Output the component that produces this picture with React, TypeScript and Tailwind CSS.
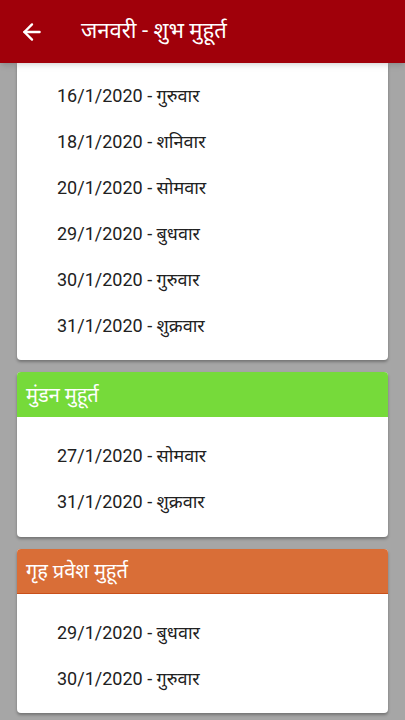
import React from "react";
import { ArrowLeft } from "lucide-react";

const rows1 = [
  "16/1/2020 - गुरुवार",
  "18/1/2020 - शनिवार",
  "20/1/2020 - सोमवार",
  "29/1/2020 - बुधवार",
  "30/1/2020 - गुरुवार",
  "31/1/2020 - शुक्रवार",
];
const rows2 = ["27/1/2020 - सोमवार", "31/1/2020 - शुक्रवार"];
const rows3 = ["29/1/2020 - बुधवार", "30/1/2020 - गुरुवार"];

function Row({ t }: { t: string }) {
  return (
    <div className="h-[46px] flex items-center pl-[40px] text-[18px] text-[#212121]">
      {t}
    </div>
  );
}

export default function App() {
  return (
    <div
      className="w-[405px] h-[720px] overflow-hidden bg-[#a6a6a6] flex flex-col"
      style={{ fontFamily: "Roboto, 'Noto Sans', sans-serif" }}
    >
      <div className="h-[63px] shrink-0 bg-[#a0000a] flex items-center shadow-md z-10">
        <ArrowLeft className="ml-[19px] text-white" size={26} strokeWidth={2.2} />
        <div className="ml-[36px] text-white text-[22px] leading-none pb-[2px]">
          जनवरी - शुभ मुहूर्त
        </div>
      </div>
      <div className="flex flex-col gap-[12px] px-[17px]">
        <div className="bg-white rounded-b-[4px] shadow-[0_2px_3px_rgba(0,0,0,0.3)] pt-[9px] pb-[12px]">
          {rows1.map((r) => (
            <Row key={r} t={r} />
          ))}
        </div>
        <div className="bg-white rounded-[4px] shadow-[0_2px_3px_rgba(0,0,0,0.3)] overflow-hidden">
          <div className="h-[45px] bg-[#76da3a] flex items-center pl-[9px] text-white text-[20px]">
            मुंडन मुहूर्त
          </div>
          <div className="pt-[15px] pb-[13px]">
            {rows2.map((r) => (
              <Row key={r} t={r} />
            ))}
          </div>
        </div>
        <div className="bg-white rounded-[4px] shadow-[0_2px_3px_rgba(0,0,0,0.3)] overflow-hidden">
          <div className="h-[45px] bg-[#d96e37] border-b border-[#c9501a] flex items-center pl-[9px] text-white text-[20px]">
            गृह प्रवेश मुहूर्त
          </div>
          <div className="pt-[15px] pb-[12px]">
            {rows3.map((r) => (
              <Row key={r} t={r} />
            ))}
          </div>
        </div>
      </div>
    </div>
  );
}
